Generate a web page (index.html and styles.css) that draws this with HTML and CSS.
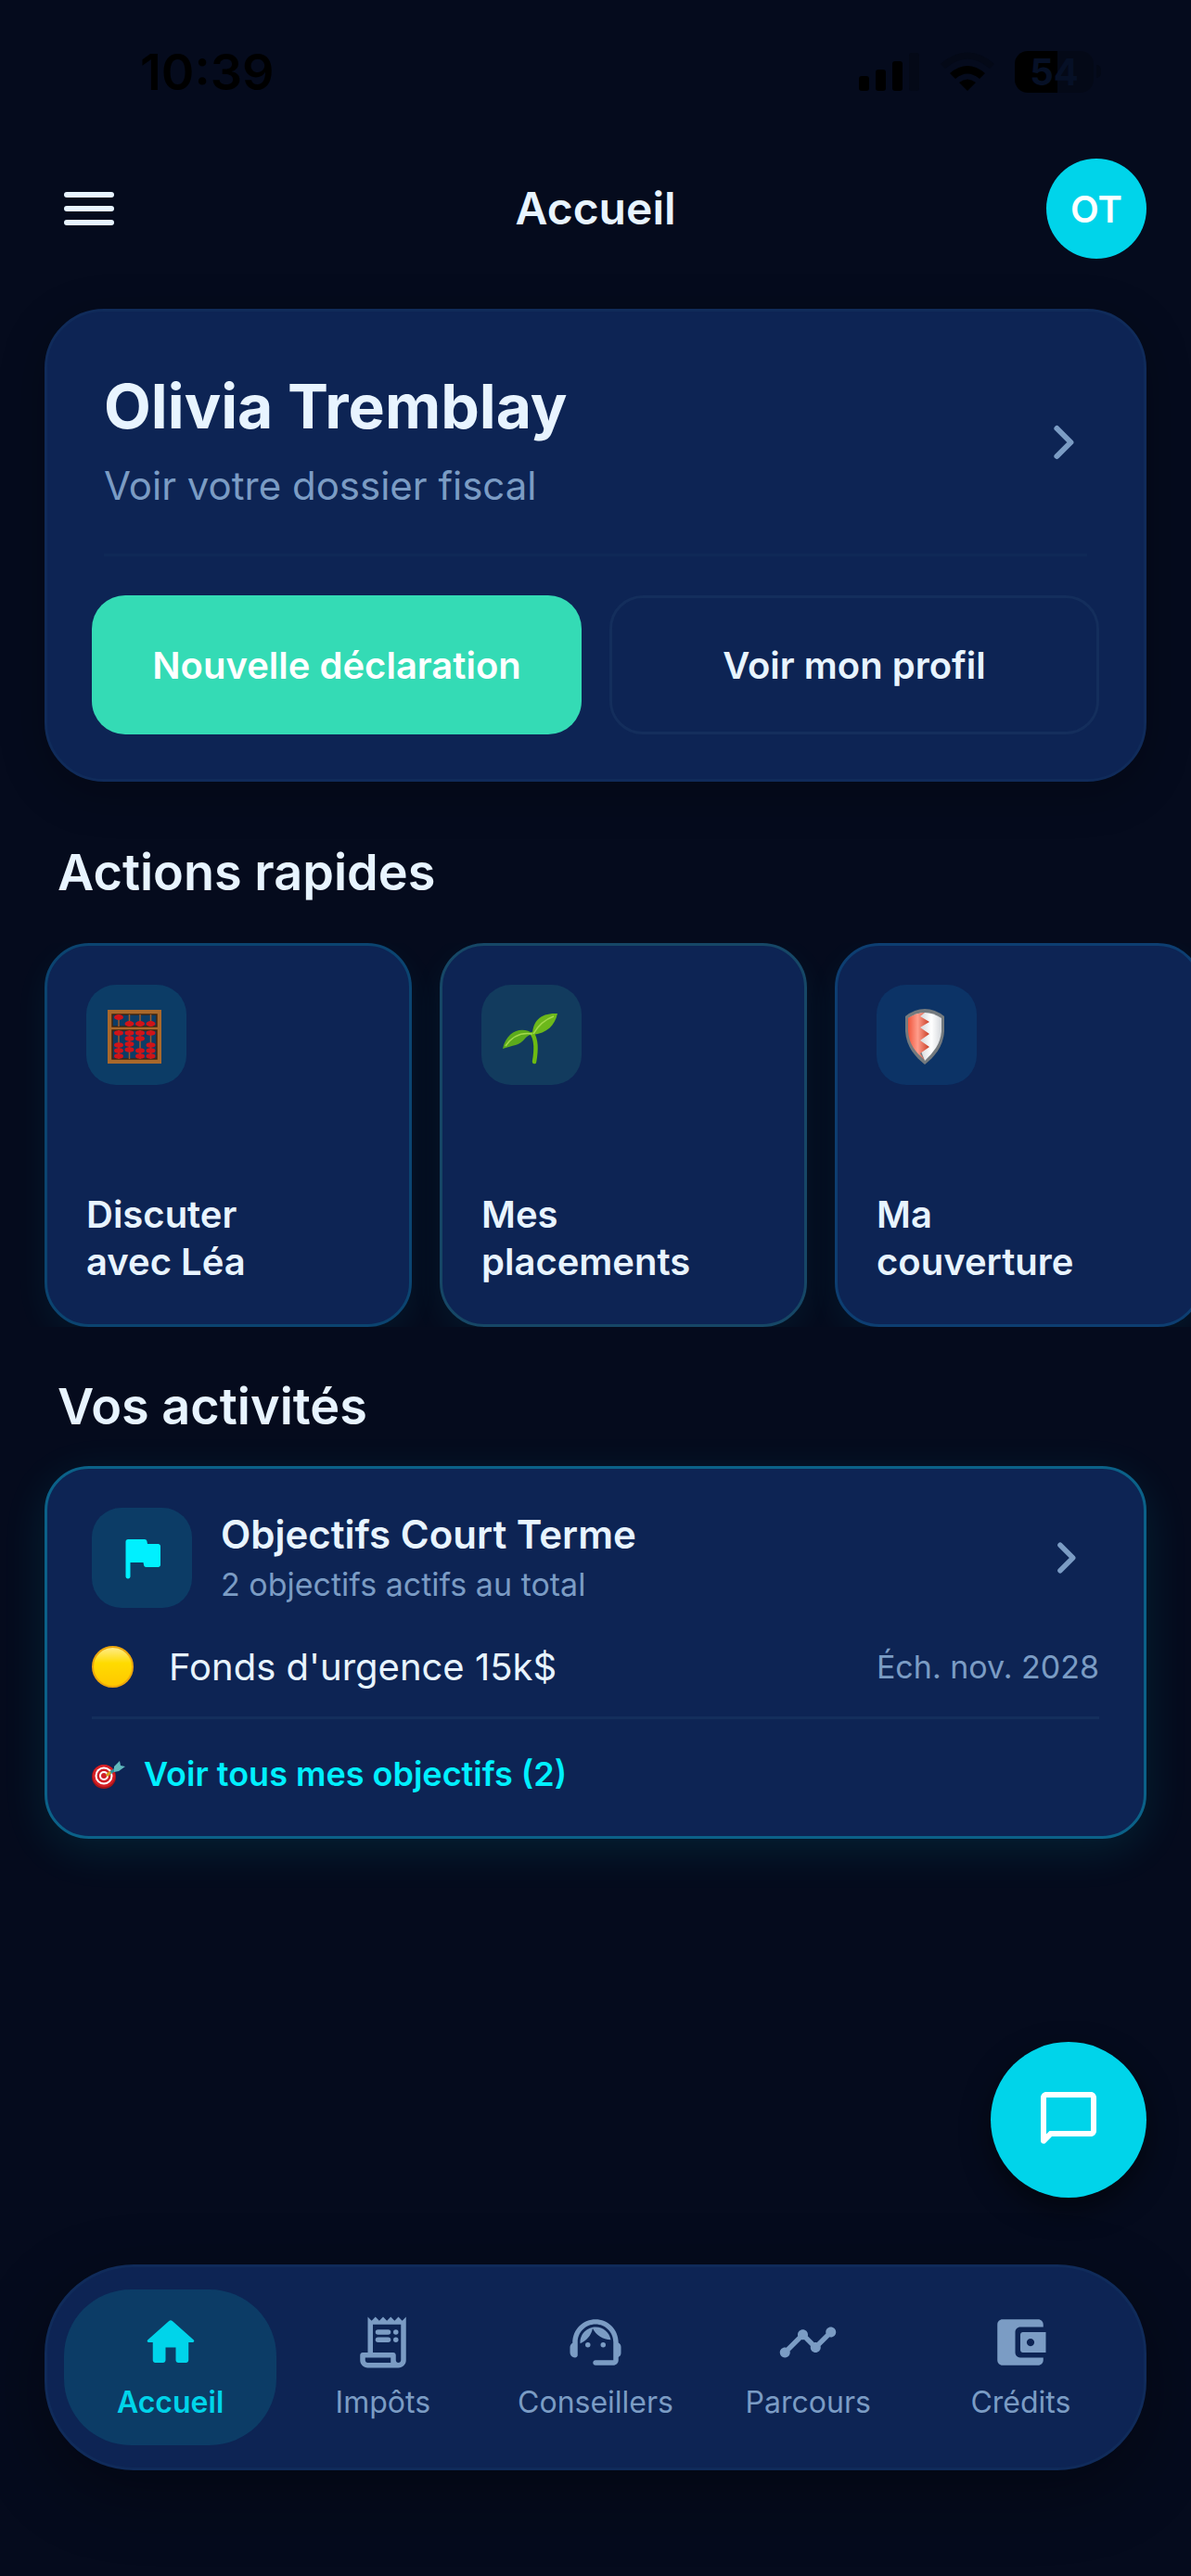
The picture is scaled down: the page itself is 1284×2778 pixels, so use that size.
FILE: index.html
```html
<!DOCTYPE html>
<html lang="fr">
<head>
<meta charset="utf-8">
<meta name="viewport" content="width=device-width, initial-scale=1">
<title>Accueil</title>
<link rel="stylesheet" href="styles.css">
</head>
<body>
<div class="app">
  <div class="status">
    <span class="status-time">10:39</span>
    <div class="status-icons">
      <svg class="signal" viewBox="0 0 66 42" aria-hidden="true">
        <rect x="0" y="26" width="11" height="16" rx="3"/>
        <rect x="18" y="19" width="11" height="23" rx="3"/>
        <rect x="36" y="10" width="11" height="32" rx="3"/>
        <rect x="54" y="1" width="11" height="41" rx="3" class="dim"/>
      </svg>
      <svg class="wifi" viewBox="0 0 58 42" aria-hidden="true">
        <path class="dim" d="M0 13Q29-12 58 13L53 18Q29-3 5 18Z"/>
        <path d="M10 23Q29 7 48 23L42 29Q29 18 16 29Z"/>
        <path d="M20 33Q29 26 38 33L29 42Z"/>
      </svg>
      <span class="battery"><span class="battery-body">54</span><span class="battery-tip"></span></span>
    </div>
  </div>

  <header class="topbar">
    <button class="menu" aria-label="Menu"><span></span><span></span><span></span></button>
    <h1>Accueil</h1>
    <button class="avatar" aria-label="Profil OT">OT</button>
  </header>

  <main>
    <section class="card profile">
      <a class="profile-link" href="#dossier">
        <span class="profile-text">
          <strong>Olivia Tremblay</strong>
          <span>Voir votre dossier fiscal</span>
        </span>
        <svg class="chevron" viewBox="0 0 24 24" aria-hidden="true"><path d="M9.800 7 14.800 12 9.800 17"/></svg>
      </a>
      <div class="profile-actions">
        <button class="btn primary">Nouvelle déclaration</button>
        <button class="btn outline">Voir mon profil</button>
      </div>
    </section>

    <h2 class="title-actions">Actions rapides</h2>
    <div class="quick">
      <a class="quick-card cyan" href="#lea">
        <span class="tile">
          <svg viewBox="0 0 60 60" aria-hidden="true">
            <path fill="#a9682b" fill-rule="evenodd" d="M-1 3h58v58H-1zM4 8v13h48V8zM4 25v31h48V25z"/>
            <path stroke="#3f2410" stroke-width="1.500" fill="none" d="M4 8h48v13H4zM4 25h48v31H4z"/>
            <path stroke="#9a5a2c" stroke-width="1.500" d="M11 8v13M22.500 8v13M34 8v13M45.500 8v13M11 25v31M22.500 25v31M34 25v31M45.500 25v31"/>
            <g fill="#d01318">
              <ellipse cx="11" cy="11" rx="5" ry="3"/><ellipse cx="22.500" cy="18" rx="5" ry="3"/><ellipse cx="34" cy="18" rx="5" ry="3"/><ellipse cx="45.500" cy="18" rx="5" ry="3"/>
              <ellipse cx="11" cy="28" rx="5" ry="2.700"/><ellipse cx="22.500" cy="28" rx="5" ry="2.700"/><ellipse cx="34" cy="28" rx="5" ry="2.700"/><ellipse cx="45.500" cy="28" rx="5" ry="2.700"/>
              <ellipse cx="11" cy="41" rx="5" ry="2.700"/><ellipse cx="22.500" cy="34" rx="5" ry="2.700"/><ellipse cx="34" cy="34" rx="5" ry="2.700"/><ellipse cx="45.500" cy="41" rx="5" ry="2.700"/>
              <ellipse cx="11" cy="47" rx="5" ry="2.700"/><ellipse cx="22.500" cy="40" rx="5" ry="2.700"/><ellipse cx="34" cy="47" rx="5" ry="2.700"/><ellipse cx="45.500" cy="47" rx="5" ry="2.700"/>
              <ellipse cx="11" cy="53" rx="5" ry="2.700"/><ellipse cx="22.500" cy="46" rx="5" ry="2.700"/><ellipse cx="34" cy="53" rx="5" ry="2.700"/><ellipse cx="45.500" cy="53" rx="5" ry="2.700"/>
            </g>
          </svg>
        </span>
        <span class="quick-label">Discuter<br>avec Léa</span>
      </a>
      <a class="quick-card green" href="#placements">
        <span class="tile">
          <svg viewBox="2 -2 60 60" aria-hidden="true">
            <path d="M33 27C38 35 37 46 35 57" fill="none" stroke="#6dbb12" stroke-width="4.500" stroke-linecap="round"/>
            <path fill="#6cb81b" d="M33 28C33 13 42 4 60 5C57 18 49 26 33 28Z"/>
            <path fill="#5cab1c" d="M34 27C23 18 5 23 1 43C12 39 19 40 25 32Q28 28 34 27Z"/>
            <path fill="none" stroke="#a2d94b" stroke-width="1.500" d="M34 27Q42 13 56 8M33 27Q15 24 4 40"/>
          </svg>
        </span>
        <span class="quick-label">Mes<br>placements</span>
      </a>
      <a class="quick-card blue" href="#couverture">
        <span class="tile">
          <svg viewBox="2 -2 60 60" aria-hidden="true">
            <defs>
              <linearGradient id="red"><stop offset="0" stop-color="#f0563c"/><stop offset=".45" stop-color="#ff9d8b"/><stop offset="1" stop-color="#c93e25"/></linearGradient>
              <linearGradient id="silver"><stop offset="0" stop-color="#a9adb3"/><stop offset=".7" stop-color="#fff"/><stop offset="1" stop-color="#d5d8dc"/></linearGradient>
            </defs>
            <path fill="#747a7e" d="M9 8Q19 0 30 0T51 8V24C50 41 40 52 30 60C20 52 10 41 9 24Z"/>
            <path fill="url(#silver)" d="M12 10Q21 4 30 4T48 10V24C47 38 39 47 30 56Z"/>
            <path fill="url(#red)" d="M12 10Q21 4 30 4L25 8 35 14 25 20 35 27 25 34 35 41 25 48 30 55C20 47 13 38 12 24Z"/>
          </svg>
        </span>
        <span class="quick-label">Ma<br>couverture</span>
      </a>
    </div>

    <h2 class="title-activity">Vos activités</h2>
    <section class="card goals">
      <a class="goals-head" href="#objectifs">
        <span class="tile flag">
          <svg viewBox="0 0 24 24" aria-hidden="true"><path d="m14.400 6-.240-1.200c-.090-.460-.500-.800-.980-.800H6c-.550 0-1 .450-1 1v15c0 .550.450 1 1 1s1-.450 1-1v-6h5.600l.240 1.200c.090.470.500.800.980.800H19c.550 0 1-.450 1-1V7c0-.550-.450-1-1-1h-4.600z"/></svg>
        </span>
        <span class="goals-text"><strong>Objectifs Court Terme</strong><span>2 objectifs actifs au total</span></span>
        <svg class="chevron" viewBox="0 0 24 24" aria-hidden="true"><path d="M9.800 7 14.800 12 9.800 17"/></svg>
      </a>
      <div class="goal">
        <span class="dot"></span>
        <span class="goal-name">Fonds d'urgence 15k$</span>
        <span class="goal-date">Éch. nov. 2028</span>
      </div>
      <a class="all-goals" href="#tous">
        <svg viewBox="0 0 36 32" aria-hidden="true">
          <circle cx="13" cy="18" r="13" fill="#a51518"/>
          <circle cx="13" cy="17" r="12" fill="#d61f26"/>
          <circle cx="13" cy="17" r="9.500" fill="#fff"/>
          <circle cx="13" cy="17" r="7.500" fill="#cf2027"/>
          <circle cx="13" cy="17" r="5" fill="#fff"/>
          <circle cx="13" cy="17" r="3" fill="#cf2027"/>
          <path d="M17 16 28 8" stroke="#2d8f9b" stroke-width="3"/>
          <path d="m24 7 6-6 1 5 5 1-7 5-5 1z" fill="#5fb8bd"/>
          <path d="m16 17 4-4" stroke="#e0a018" stroke-width="3"/>
        </svg>
        <span>Voir tous mes objectifs (2)</span>
      </a>
    </section>
  </main>

  <div class="dock">
    <button class="fab" aria-label="Messages">
      <svg viewBox="0 0 24 24" aria-hidden="true"><path d="M20 2H4c-1.100 0-2 .900-2 2v15.590c0 .890 1.080 1.340 1.710.710L6 18h14c1.100 0 2-.900 2-2V4c0-1.100-.900-2-2-2zm0 14H5.170L4 17.170V4h16v12z"/></svg>
    </button>
    <nav class="tabs">
      <a class="tab active" href="#accueil" aria-current="page">
        <svg viewBox="0 0 24 24" aria-hidden="true"><path d="M10 19v-5h4v5c0 .550.450 1 1 1h3c.550 0 1-.450 1-1v-7h1.700c.460 0 .680-.570.330-.870L12.670 3.600c-.380-.340-.960-.340-1.340 0l-8.360 7.530c-.340.300-.130.870.330.870H5v7c0 .550.450 1 1 1h3c.550 0 1-.450 1-1z"/></svg>
        <span>Accueil</span>
      </a>
      <a class="tab" href="#impots">
        <svg viewBox="0 0 24 24" aria-hidden="true"><path d="M19.500 3.500 18 2l-1.500 1.500L15 2l-1.500 1.500L12 2l-1.500 1.500L9 2 7.500 3.500 6 2v14H4c-.550 0-1 .450-1 1v2c0 1.660 1.340 3 3 3h12c1.660 0 3-1.340 3-3V2l-1.500 1.500zM15 20H6c-.550 0-1-.450-1-1v-1h10v2zm4-1c0 .550-.450 1-1 1s-1-.450-1-1v-2c0-.550-.450-1-1-1H8V5h11v14z"/><rect x="9" y="7" width="6" height="2" rx="1"/><rect x="9" y="10" width="6" height="2" rx="1"/><circle cx="17" cy="8" r="1"/><circle cx="17" cy="11" r="1"/></svg>
        <span>Impôts</span>
      </a>
      <a class="tab" href="#conseillers">
        <svg viewBox="0 0 24 24" aria-hidden="true"><path d="M21 12.220C21 6.730 16.740 3 12 3c-4.690 0-9 3.650-9 9.280-.600.340-1 .980-1 1.720v2c0 1.100.900 2 2 2 .550 0 1-.450 1-1v-5.100c0-3.870 3.130-7 7-7s7 3.130 7 7V19h-7c-.550 0-1 .450-1 1s.450 1 1 1h7c1.100 0 2-.900 2-2v-1.220c.590-.310 1-.920 1-1.640v-2.300c0-.700-.410-1.310-1-1.620z"/><circle cx="9" cy="13" r="1"/><circle cx="15" cy="13" r="1"/><path d="M18 11.030C17.520 8.180 15.040 6 12.050 6c-3.030 0-6.290 2.510-6.030 6.450 2.470-1.010 4.330-3.210 4.860-5.890 1.310 2.630 4 4.440 7.120 4.470z"/></svg>
        <span>Conseillers</span>
      </a>
      <a class="tab" href="#parcours">
        <svg viewBox="0 0 24 24" aria-hidden="true"><path d="M23 8c0 1.100-.900 2-2 2-.180 0-.350-.020-.510-.070l-3.560 3.550c.050.160.070.340.070.520 0 1.100-.900 2-2 2s-2-.900-2-2c0-.180.020-.360.070-.520l-2.550-2.550c-.160.050-.340.070-.520.070s-.360-.020-.520-.070l-4.550 4.560c.050.160.070.330.070.510 0 1.100-.900 2-2 2s-2-.900-2-2 .900-2 2-2c.180 0 .350.020.510.070l4.560-4.550C8.020 9.360 8 9.180 8 9c0-1.100.900-2 2-2s2 .900 2 2c0 .180-.020.360-.070.520l2.550 2.550c.160-.050.340-.070.520-.070s.360.020.520.070l3.550-3.560C19.020 8.350 19 8.180 19 8c0-1.100.900-2 2-2s2 .900 2 2z"/></svg>
        <span>Parcours</span>
      </a>
      <a class="tab" href="#credits">
        <svg viewBox="0 0 24 24" aria-hidden="true"><path fill-rule="evenodd" d="M10 16V8c0-1.100.890-2 2-2h9V5c0-1.100-.900-2-2-2H5c-1.110 0-2 .900-2 2v14c0 1.100.890 2 2 2h14c1.100 0 2-.900 2-2v-1h-9c-1.110 0-2-.900-2-2zm3-8c-.550 0-1 .450-1 1v6c0 .550.450 1 1 1h9V8h-9zm3 5.500c-.830 0-1.500-.670-1.500-1.500s.670-1.500 1.500-1.500 1.500.670 1.500 1.500-.670 1.500-1.500 1.500z"/></svg>
        <span>Crédits</span>
      </a>
    </nav>
  </div>
</div>
</body>
</html>
```
FILE: styles.css
```css
:root {
  --bg: #050b1d;
  --card: #0d2454;
  --line: #142e5c;
  --text: #e8f4ff;
  --muted: #7b9cc4;
  --cyan: #00d4ea;
  --neon: #00f0ff;
}

* { box-sizing: border-box; }

body {
  margin: 0;
  background: var(--bg);
  color: var(--text);
  font-family: Inter, "Liberation Sans", sans-serif;
}

a { color: inherit; text-decoration: none; }

button {
  border: 0;
  padding: 0;
  color: inherit;
  font: inherit;
  cursor: pointer;
}

svg { display: block; flex: none; fill: currentColor; }

h1, h2 { margin: 0; font-weight: 600; }

.app {
  display: flex;
  flex-direction: column;
  min-height: 100vh;
  overflow: hidden;
}

/* Status bar */
.status {
  display: flex;
  justify-content: space-between;
  align-items: center;
  height: 154px;
  padding: 0 97px 0 151px;
  color: #000;
}

.status-time { font-size: 54px; font-weight: 600; }

.status-icons { display: flex; align-items: center; gap: 22px; }
.signal { width: 66px; height: 42px; }
.wifi { width: 58px; height: 42px; }
.dim { fill: #040917; }

.battery { display: flex; align-items: center; gap: 3px; }

.battery-body {
  width: 85px;
  border-radius: 14px;
  background: linear-gradient(90deg, #000 54%, #040917 54%);
  color: #061026;
  font-size: 40px;
  font-weight: 700;
  line-height: 45px;
  text-align: center;
}

.battery-tip {
  width: 5px;
  height: 14px;
  border-radius: 0 5px 5px 0;
  background: #040917;
}

/* Top bar */
.topbar {
  display: grid;
  grid-template-columns: 108px 1fr 108px;
  align-items: center;
  padding: 17px 48px 54px;
}

.topbar h1 { font-size: 48px; line-height: 60px; text-align: center; }

.menu {
  display: flex;
  flex-direction: column;
  gap: 9px;
  width: 96px;
  padding: 21px;
  background: none;
}

.menu span { height: 6px; border-radius: 3px; background: var(--text); }

.avatar {
  width: 108px;
  height: 108px;
  border-radius: 50%;
  background: var(--cyan);
  color: #fff;
  font-size: 40px;
  font-weight: 600;
}

/* Cards */
main { padding: 0 48px; }

.card {
  padding: 48px;
  border: 3px solid #102b5a;
  background: var(--card);
}

.chevron {
  width: 72px;
  height: 72px;
  fill: none;
  stroke: var(--muted);
  stroke-width: 2;
  stroke-linecap: round;
  stroke-linejoin: round;
}

.profile {
  padding-top: 60px;
  border-radius: 64px;
  box-shadow: 0 12px 48px rgba(0, 0, 0, .25);
}

.profile-link {
  display: flex;
  align-items: center;
  justify-content: space-between;
  margin: 0 13px 42px;
  padding-bottom: 39px;
  border-bottom: 3px solid #0f2957;
}

.profile-link .chevron { margin-right: -10px; }

.profile-text { display: flex; flex-direction: column; gap: 10px; }
.profile-text strong { font-size: 66px; font-weight: 700; line-height: 84px; }
.profile-text > span { color: var(--muted); font-size: 42px; line-height: 68px; }

.profile-actions { display: grid; grid-template-columns: 1fr 1fr; gap: 30px; }

.btn {
  height: 150px;
  border-radius: 36px;
  font-size: 40px;
  font-weight: 600;
}

.primary { background: #34dbb5; color: #fff; }
.outline { border: 3px solid var(--line); background: none; }

/* Quick actions */
h2 { padding-left: 14px; font-size: 54px; line-height: 72px; }
.title-actions { margin: 62px 0 40px; }
.title-activity { margin: 50px 0 28px; }

.quick {
  display: grid;
  grid-template-columns: repeat(3, 396px);
  gap: 30px;
  margin: 0 -48px;
  padding: 0 48px;
  overflow: hidden;
}

.quick-card {
  display: flex;
  flex-direction: column;
  justify-content: space-between;
  min-height: 414px;
  padding: 42px;
  border: 3px solid;
  border-radius: 48px;
  background: var(--card);
  box-shadow: 0 12px 36px rgba(0, 240, 255, .06);
}

.quick-card.cyan { border-color: #0b4470; }
.quick-card.green { border-color: #164766; }
.quick-card.blue { border-color: #0d3e71; }

.tile {
  display: grid;
  place-items: center;
  flex: none;
  width: 108px;
  height: 108px;
  border-radius: 32px;
  background: #0c3c66;
}

.tile svg { width: 60px; height: 60px; overflow: visible; }
.green .tile { background: #123b5e; }
.blue .tile { background: #0c3366; }

.quick-label { font-size: 40px; font-weight: 600; line-height: 51px; }

/* Goals */
.goals {
  padding-top: 42px;
  padding-bottom: 41px;
  border-color: #0b6188;
  border-radius: 48px;
  box-shadow: 0 12px 48px rgba(0, 240, 255, .1);
}

.goals-head { display: flex; align-items: center; gap: 31px; }
.goals-head .chevron { height: 66px; }
.flag { color: var(--neon); }
.goals-text { flex: 1; display: flex; flex-direction: column; }
.goals-text strong { font-size: 42px; font-weight: 600; line-height: 58px; }
.goals-text > span { color: var(--muted); font-size: 34px; line-height: 50px; }

.goal {
  display: flex;
  align-items: center;
  padding: 38px 0 28px;
  border-bottom: 3px solid var(--line);
}

.dot {
  width: 45px;
  height: 45px;
  margin-right: 38px;
  border: 2px solid #eda70c;
  border-radius: 50%;
  background: linear-gradient(#ffec86, #ffdb00 40%, #ffc800);
}

.goal-name { flex: 1; font-size: 40px; line-height: 51px; }
.goal-date { color: var(--muted); font-size: 34px; }

.all-goals {
  display: flex;
  align-items: center;
  gap: 20px;
  padding-top: 34px;
  color: var(--neon);
  font-size: 36px;
  font-weight: 600;
  line-height: 51px;
}

.all-goals svg { width: 36px; height: 32px; }

/* Floating button and tab bar */
.dock {
  display: flex;
  flex-direction: column;
  align-items: flex-end;
  gap: 72px;
  margin-top: auto;
  padding: 48px 48px 114px;
}

.fab {
  display: grid;
  place-items: center;
  width: 168px;
  height: 168px;
  border-radius: 50%;
  background: var(--cyan);
  color: #fff;
  box-shadow: 0 12px 30px rgba(0, 0, 0, .5);
}

.fab svg { width: 72px; height: 72px; }

.tabs {
  display: flex;
  width: 100%;
  padding: 24px 18px;
  border: 3px solid #102b5a;
  border-radius: 96px;
  background: var(--card);
  box-shadow: 0 24px 72px rgba(0, 0, 0, .35);
}

.tab {
  display: flex;
  flex: 1 1 0;
  flex-direction: column;
  align-items: center;
  gap: 10px;
  min-width: 0;
  padding: 24px 0;
  border-radius: 72px;
  color: var(--muted);
  font-size: 32px;
  line-height: 44px;
}

.tab svg { width: 66px; height: 66px; }
.tab.active { background: #0c3c66; color: var(--cyan); font-weight: 600; }
```
